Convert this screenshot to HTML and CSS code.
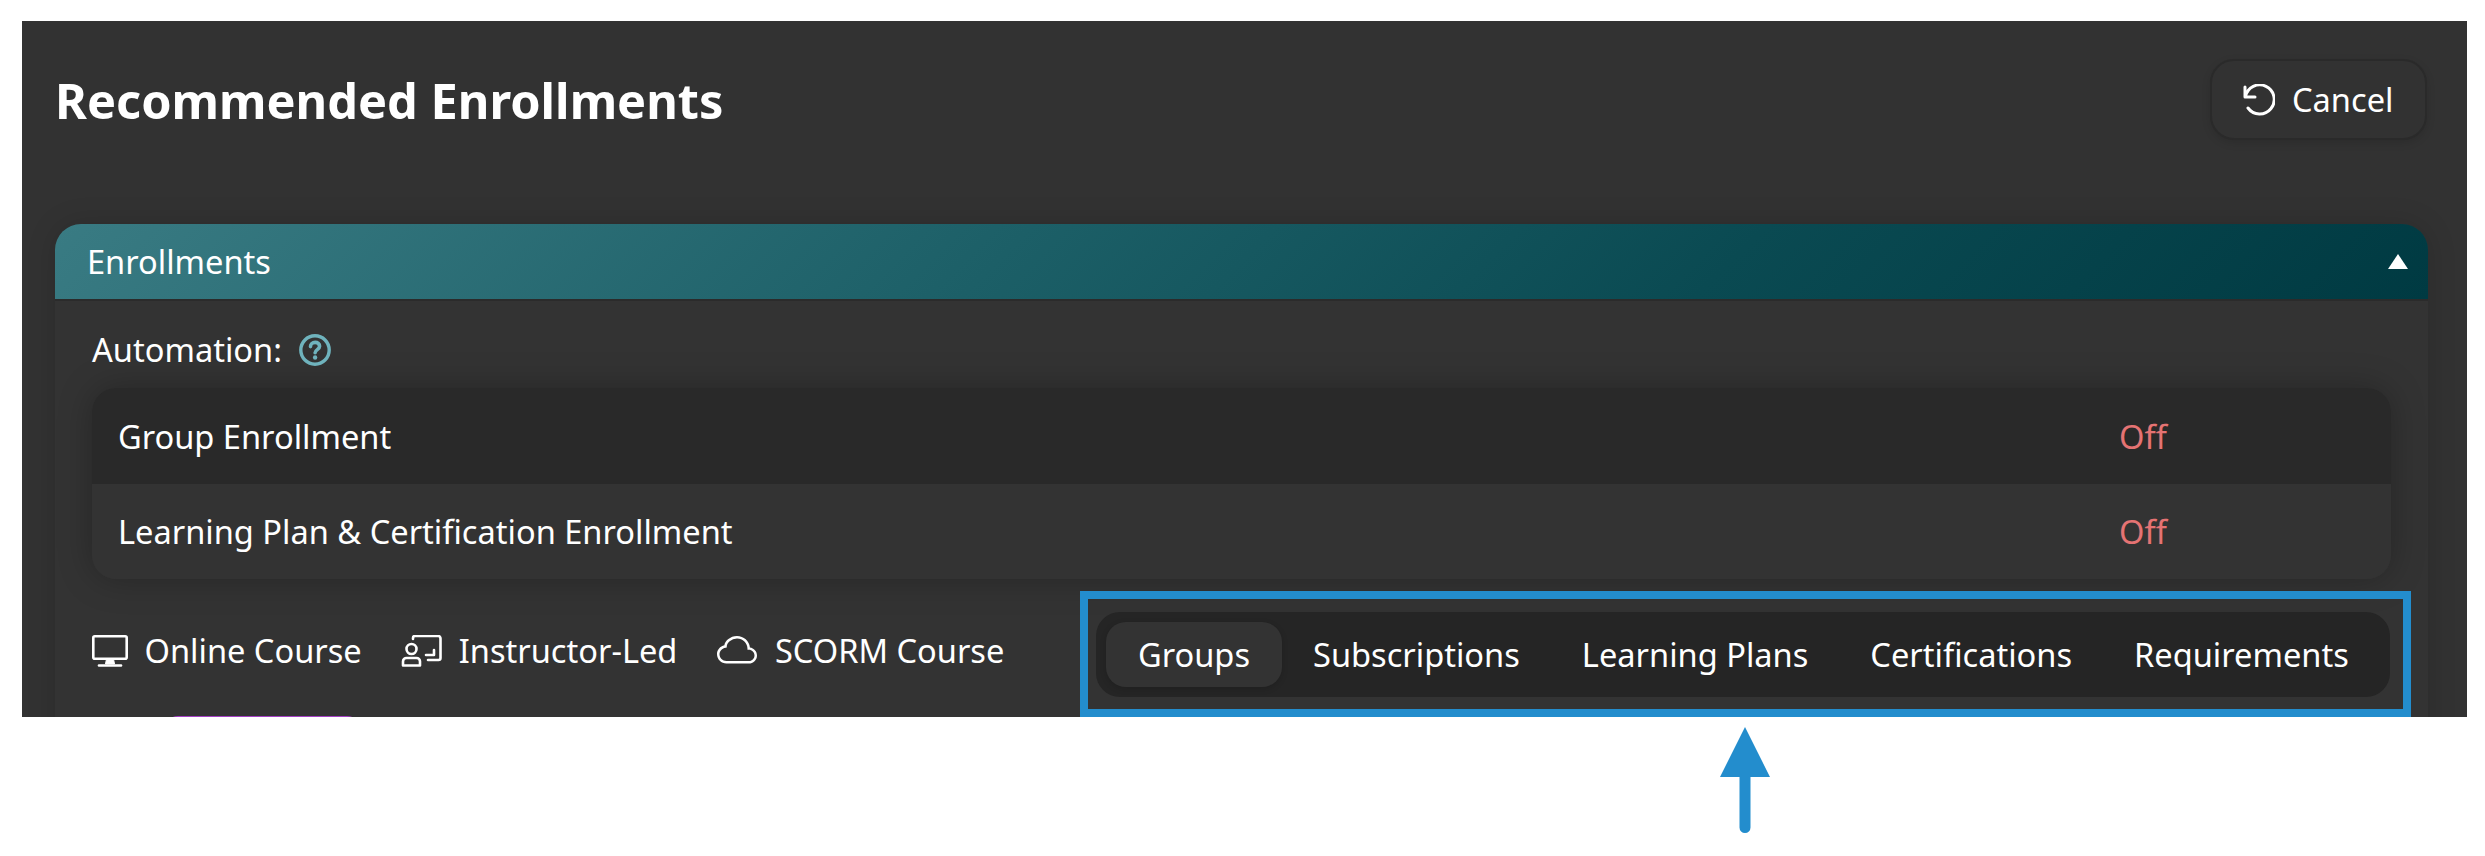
FILE: index.html
```html
<!DOCTYPE html>
<html lang="en">
<head>
<meta charset="utf-8">
<title>Recommended Enrollments</title>
<link rel="stylesheet" href="styles.css">
</head>
<body>
<main class="panel">
  <header class="page-head">
    <h1 class="title">Recommended Enrollments</h1>
    <button class="cancel" type="button">
      <svg class="cancel-icon" viewBox="0 0 32 32" fill="none" stroke="currentColor" stroke-width="3" stroke-linecap="round" stroke-linejoin="round"><path d="M2 3v10h10"/><path d="M2.5 12.5A14.5 14.5 0 1 1 5 24"/></svg>
      <span>Cancel</span>
    </button>
  </header>
  <section class="card">
    <div class="card-head">
      <span>Enrollments</span>
      <span class="caret"></span>
    </div>
    <div class="card-body">
      <div class="automation">
        <span>Automation:</span>
        <svg class="help" viewBox="0 0 32 32" fill="none"><circle cx="16" cy="16" r="14.200" stroke="currentColor" stroke-width="3.400"/><path d="M11.5 12.6c0-2.6 2-4.2 4.6-4.2s4.5 1.5 4.5 3.9c0 3.3-4.5 3.3-4.5 6.400" stroke="currentColor" stroke-width="3.600" stroke-linecap="round"/><circle cx="16.100" cy="23.500" r="2.200" fill="currentColor"/></svg>
      </div>
      <div class="status-list">
        <div class="status-row dark"><span>Group Enrollment</span><span class="off">Off</span></div>
        <div class="status-row"><span>Learning Plan &amp; Certification Enrollment</span><span class="off">Off</span></div>
      </div>
      <div class="toolbar">
        <div class="legend">
          <div class="legend-item">
            <svg class="ico-monitor" viewBox="0 0 36 32" fill="none" stroke="currentColor" stroke-width="2.6" stroke-linejoin="round" stroke-linecap="round"><rect x="1.3" y="1.3" width="33.4" height="22.4" rx="1.5"/><path d="M14.5 24l-1 5h9l-1-5" fill="currentColor" stroke-width="1"/><path d="M7 30.5h22"/></svg>
            <span>Online Course</span>
          </div>
          <div class="legend-item">
            <svg class="ico-led" viewBox="0 0 41 32" fill="none" stroke="currentColor" stroke-width="2.6" stroke-linejoin="round" stroke-linecap="round"><path d="M12 4V3a2 2 0 0 1 2-2h23a2.500 2.500 0 0 1 2.500 2.500V23a2 2 0 0 1-2 2H27"/><circle cx="10.500" cy="14" r="5"/><path d="M2 30.500v-4a3.500 3.500 0 0 1 3.500-3.500h10a3.500 3.500 0 0 1 3.500 3.500v4z"/><path d="M25 20h8v-5"/></svg>
            <span>Instructor-Led</span>
          </div>
          <div class="legend-item">
            <svg class="ico-cloud" viewBox="0 0 16 16" fill="currentColor"><path d="M4.406 3.342A5.53 5.53 0 0 1 8 2c2.690 0 4.923 2 5.166 4.579C14.758 6.804 16 8.137 16 9.773 16 11.569 14.502 13 12.687 13H3.781C1.708 13 0 11.366 0 9.318c0-1.763 1.266-3.223 2.942-3.593.143-.863.698-1.723 1.464-2.383m.653.757c-.757.653-1.153 1.440-1.153 2.056v.448l-.445.049C2.064 6.805 1 7.952 1 9.318 1 10.785 2.230 12 3.781 12h8.906C13.980 12 15 10.988 15 9.773c0-1.216-1.020-2.228-2.313-2.228h-.5v-.5C12.188 4.825 10.328 3 8 3a4.530 4.530 0 0 0-2.941 1.100z"/></svg>
            <span>SCORM Course</span>
          </div>
        </div>
        <nav class="tabs">
          <a class="tab active">Groups</a>
          <a class="tab">Subscriptions</a>
          <a class="tab">Learning Plans</a>
          <a class="tab">Certifications</a>
          <a class="tab">Requirements</a>
        </nav>
      </div>
      <div class="pill"></div>
    </div>
  </section>
</main>
<div class="highlight"></div>
<svg class="arrow" viewBox="0 0 50 106"><path d="M25 0L50 50H30.500V100.500a5.500 5.500 0 0 1-11 0V50H0z"/></svg>
</body>
</html>
```
FILE: styles.css
```css
* { box-sizing: border-box; }
html, body { margin: 0; height: 100%; background: #fff; }
body {
  padding: 21px 18px 0 22px;
  font-family: "Noto Sans", sans-serif;
  font-size: 32.6px;
  color: #fff;
  overflow: hidden;
  position: relative;
}
.panel {
  height: 696px;
  padding: 46px 39px 0 33px;
  background: #323232;
  overflow: hidden;
}
.page-head {
  display: flex;
  justify-content: space-between;
  align-items: flex-start;
  height: 157px;
}
.title {
  margin: 0;
  font-size: 48.7px;
  line-height: 66px;
  font-weight: 700;
}
.cancel {
  display: flex;
  align-items: center;
  gap: 17px;
  width: 217px;
  height: 81px;
  margin: -8px 1px 0 0;
  padding: 0 0 0 31px;
  background: #323232;
  color: #fff;
  font: inherit;
  border: 2px solid #2a2a2a;
  border-radius: 24px;
  box-shadow: 0 3px 8px rgba(0, 0, 0, .12);
}
.cancel-icon { width: 32px; height: 32px; flex: none; }
.card {
  border-radius: 26px 26px 0 0;
  background: #333;
  box-shadow: 0 0 30px rgba(0, 0, 0, .14);
}
.card-head {
  display: flex;
  justify-content: space-between;
  align-items: center;
  height: 77px;
  padding: 0 20px 0 32px;
  border-radius: 26px 26px 0 0;
  background: linear-gradient(135deg, #397b83 0%, #1c5f67 40%, #0a4a52 70%, #003a42 100%);
  line-height: 44px;
  border-bottom: 2px solid #2b2b2b;
}
.caret {
  width: 0;
  height: 0;
  border-left: 10px solid transparent;
  border-right: 10px solid transparent;
  border-bottom: 15px solid #fff;
}
.card-body {
  padding: 0 37px;
}
.automation {
  display: flex;
  align-items: center;
  gap: 17px;
  height: 87px;
  padding-top: 10px;
  line-height: 44px;
}
.help { width: 32px; height: 32px; color: #6fb3bd; }
.status-list {
  border-radius: 24px;
  overflow: hidden;
  box-shadow: 0 0 34px rgba(0, 0, 0, .26);
  height: 191px;
}
.status-row {
  display: flex;
  align-items: center;
  height: 95px;
  padding: 0 0 0 26px;
  background: #333;
}
.status-row.dark { background: #292929; height: 96px; }
.status-row > span:first-child { width: 2001px; }
.off { color: #e57373; }
.toolbar {
  display: flex;
  justify-content: space-between;
  align-items: flex-start;
  margin-top: 33px;
  padding-right: 1px;
}
.legend {
  display: flex;
  gap: 39.500px;
  padding-top: 16.500px;
}
.legend-item {
  display: flex;
  align-items: center;
  height: 44px;
  white-space: nowrap;
}
.ico-monitor { width: 36px; height: 32px; margin-right: 16.500px; }
.ico-led { width: 41px; height: 32px; margin-right: 16.500px; }
.ico-cloud { width: 40px; height: 40px; margin-right: 18px; }
.tabs {
  display: flex;
  flex: none;
  height: 85px;
  padding: 10px;
  background: #252525;
  border-radius: 24px;
  width: 1294px;
}
.tab {
  display: flex;
  align-items: center;
  height: 65px;
  padding: 0 31px;
  border-radius: 20px;
  line-height: 44px;
  white-space: nowrap;
  flex: none;
}
.tab.active {
  padding: 0 32px;
  background: #333;
  box-shadow: 0 2px 6px rgba(0, 0, 0, .15);
}
.pill {
  width: 197px;
  height: 40px;
  margin: 19px 0 0 72px;
  background: #a33fc4;
  border-radius: 14px 14px 0 0;
}
.highlight {
  position: absolute;
  left: 1080px;
  top: 591px;
  width: 1331px;
  height: 126px;
  border: 8px solid #238dcd;
  pointer-events: none;
}
.arrow {
  position: absolute;
  left: 1720px;
  top: 727px;
  width: 50px;
  height: 106px;
  fill: #238dcd;
}
```
